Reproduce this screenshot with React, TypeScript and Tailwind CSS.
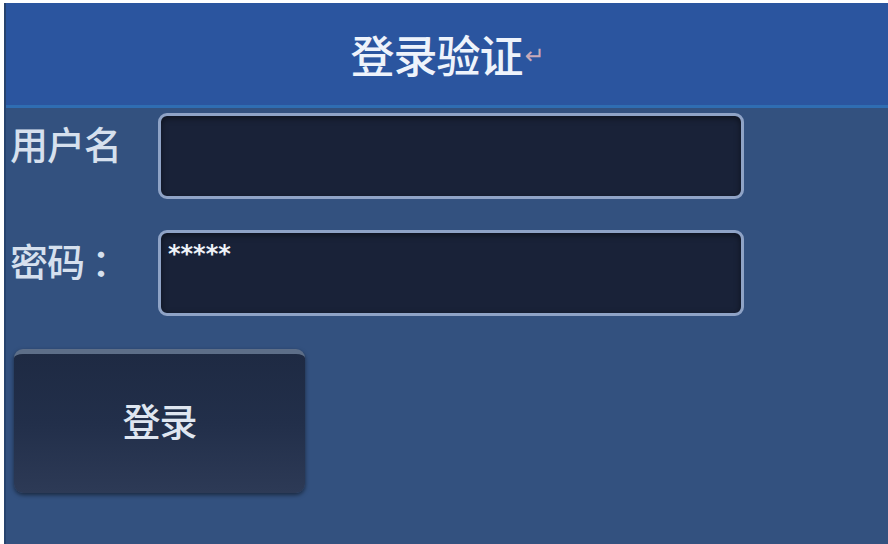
import React from 'react';

const cjk = { fontFamily: '"Noto Sans CJK SC", "Noto Sans", sans-serif' };

const Field: React.FC<{ label: string; value?: string; className?: string }> = ({ label, value, className }) => (
  <div className={`flex items-start ${className ?? ''}`}>
    <div className="w-[150px] pt-[6px] pl-[2px] text-[38px] leading-[48px] font-medium text-[#d6e0ee] tracking-[-1px] whitespace-pre">
      {label}
    </div>
    <div className="w-[586px] h-[86px] rounded-[9px] border-[3px] border-[#8fa3c6] bg-[#192238] px-[7px] pt-[10px] shadow-[inset_0_2px_6px_rgba(0,0,0,0.5)]">
      {value && (
        <span className="block text-[24px] leading-[22px] font-bold text-[#eef2f8] tracking-[0px]" style={{ fontFamily: '"DejaVu Sans", sans-serif' }}>
          {value}
        </span>
      )}
    </div>
  </div>
);

export default function App() {
  return (
    <div className="w-[888px] h-[544px] bg-white pt-[3px] pl-[4px] overflow-hidden" style={cjk}>
      <div className="h-full flex flex-col bg-[#33517f] border-l-2 border-[#27436e]">
        {/* Header */}
        <div className="h-[105px] shrink-0 bg-[#2b559f] border-b-[3px] border-[#2f6db2] flex items-center justify-center">
          <h1 className="text-[44px] leading-none text-[#eef3fb] font-medium tracking-[-1px] flex items-end">
            登录验证
            <span className="text-[24px] text-[#c9a9b8] ml-[2px] mb-[8px]" style={{ fontFamily: '"DejaVu Sans", sans-serif' }}>
              ↵
            </span>
          </h1>
        </div>

        {/* Form */}
        <div className="flex flex-col pl-[2px] pt-[5px]">
          <Field label="用户名" />
          <Field label="密码 ：" value="*****" className="mt-[31px]" />

          <button className="mt-[33px] ml-[6px] w-[291px] h-[144px] rounded-[9px] border-t-[5px] border-[#5d6e88] bg-gradient-to-b from-[#1e2a43] via-[#222f4a] to-[#2d3a56] shadow-[0_2px_4px_rgba(0,0,0,0.5)] flex items-center justify-center pb-[8px]">
            <span className="text-[38px] font-medium text-[#dfe6f0] leading-none tracking-[-1px]">登录</span>
          </button>
        </div>
      </div>
    </div>
  );
}
